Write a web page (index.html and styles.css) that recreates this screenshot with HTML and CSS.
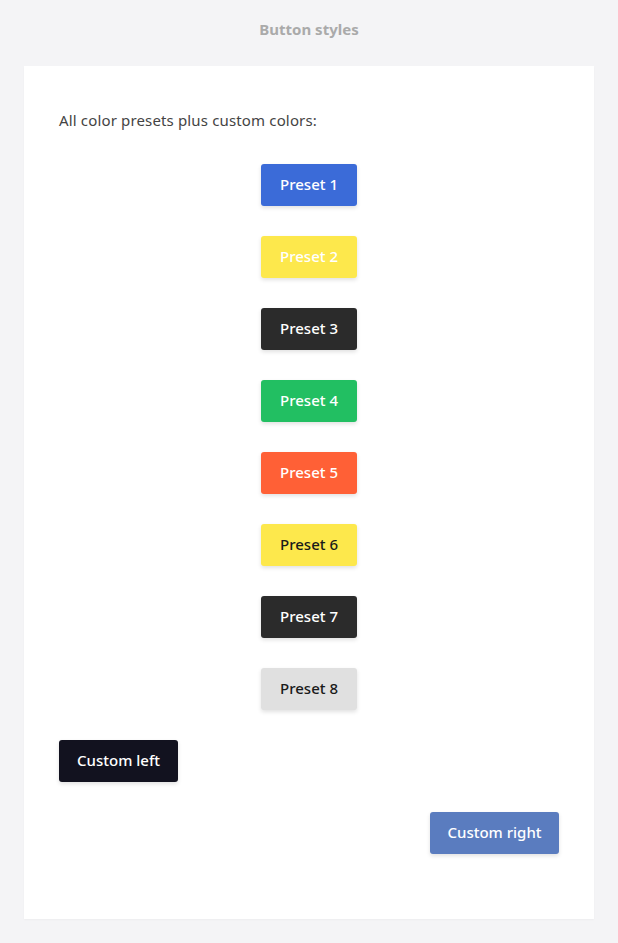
FILE: index.html
```html
<!DOCTYPE html>
<html lang="en">
<head>
  <meta charset="UTF-8" />
  <meta name="viewport" content="width=device-width, initial-scale=1.0"/>
  <title>Button styles</title>
  <link rel="stylesheet" href="styles.css">
</head>
<body>
  <div class="page-title">Button styles</div>
  <div class="card">
    <p class="intro">All color presets plus custom colors:</p>
    <div class="button-list">
      <button class="btn preset-1">Preset 1</button>
      <button class="btn preset-2">Preset 2</button>
      <button class="btn preset-3">Preset 3</button>
      <button class="btn preset-4">Preset 4</button>
      <button class="btn preset-5">Preset 5</button>
      <button class="btn preset-6">Preset 6</button>
      <button class="btn preset-7">Preset 7</button>
      <button class="btn preset-8">Preset 8</button>
      <button class="btn custom-left">Custom left</button>
      <button class="btn custom-right">Custom right</button>
    </div>
  </div>
</body>
</html>
```

FILE: styles.css
```css
body {
  margin: 0;
  padding: 0 24px 24px;
  background: #f4f4f6;
  font-family: "Noto Sans", Lato, sans-serif;
}

.page-title {
  text-align: center;
  font-size: 15px;
  font-weight: bold;
  color: #aaaaaa;
  line-height: 20px;
  padding: 19px 0 27px;
}

.card {
  background: #ffffff;
  padding: 43px 35px 65px;
  box-shadow: 0 1px 2px rgba(0, 0, 0, 0.03);
}

.intro {
  margin: 0 0 33px;
  font-size: 15px;
  line-height: 22px;
  letter-spacing: 0.15px;
  color: #444444;
}

.button-list {
  display: flex;
  flex-direction: column;
  align-items: center;
  gap: 30px;
}

.btn {
  height: 42px;
  width: 96px;
  padding: 0 0 3px;
  border: none;
  border-radius: 3px;
  font-family: inherit;
  font-size: 15px;
  font-weight: 500;
  color: #ffffff;
  cursor: pointer;
  box-shadow: 0 2px 4px rgba(0, 0, 0, 0.12);
}

.preset-1 { background: #3b6bd8; }
.preset-2 { background: #fde84c; }
.preset-3 { background: #2b2b2b; }
.preset-4 { background: #22bf62; }
.preset-5 { background: #ff6036; }
.preset-6 { background: #fde84c; color: #1a1a1a; }
.preset-7 { background: #2b2b2b; }
.preset-8 { background: #e0e0e0; color: #1a1a1a; }

.custom-left {
  align-self: flex-start;
  width: 119px;
  background: #12121f;
}

.custom-right {
  align-self: flex-end;
  width: 129px;
  background: #5a7cbf;
}
```
